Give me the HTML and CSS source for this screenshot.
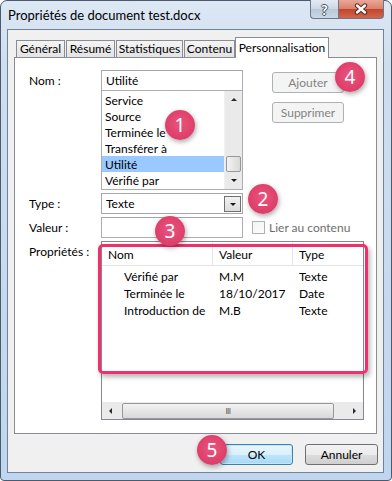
FILE: index.html
```html
<!DOCTYPE html>
<html lang="fr">
<head>
    <meta charset="UTF-8">
    <meta name="viewport" content="width=device-width, initial-scale=1.0">
    <title>Propriétés de document test.docx</title>
    <link rel="stylesheet" href="styles.css">
</head>
<body>
    <div class="window">
        <div class="titlebar">
            <span class="title">Propriétés de document test.docx</span>
            <div class="caption">
                <span class="cap help">?</span>
                <span class="cap close">
                    <svg width="16" height="12" viewBox="0 0 16 12">
                        <path d="M4 2.5 L12 9.5 M12 2.5 L4 9.5" stroke="#5a2a20" stroke-width="4.4" stroke-linecap="round"/>
                        <path d="M4 2.5 L12 9.5 M12 2.5 L4 9.5" stroke="#fff" stroke-width="2.4" stroke-linecap="round"/>
                    </svg>
                </span>
            </div>
        </div>

        <div class="client">
            <div class="tabs">
                <span class="tab t1">Général</span>
                <span class="tab t2">Résumé</span>
                <span class="tab t3">Statistiques</span>
                <span class="tab t4">Contenu</span>
                <span class="tab active">Personnalisation</span>
            </div>

            <div class="panel">
                <div class="form">
                    <label class="lbl">Nom :</label>
                    <div class="namebox">
                        <div class="field">Utilité</div>
                        <div class="listbox">
                            <div class="items">
                                <div class="item">Service</div>
                                <div class="item">Source</div>
                                <div class="item">Terminée le</div>
                                <div class="item">Transférer à</div>
                                <div class="item selected">Utilité</div>
                                <div class="item">Vérifié par</div>
                            </div>
                            <div class="vscroll">
                                <span class="sbtn"><span class="arrow up"></span></span>
                                <span class="track"></span>
                                <span class="thumb"></span>
                                <span class="sbtn"><span class="arrow down"></span></span>
                            </div>
                        </div>
                    </div>
                    <div class="side">
                        <button class="btn disabled">Ajouter</button>
                        <button class="btn disabled">Supprimer</button>
                    </div>

                    <label class="lbl">Type :</label>
                    <div class="field combo">Texte<span class="drop"><span class="arrow down"></span></span></div>
                    <div></div>

                    <label class="lbl">Valeur :</label>
                    <div class="field"></div>
                    <label class="check"><span class="box"></span>Lier au contenu</label>

                    <label class="lbl">Propriétés :</label>
                    <div class="listview">
                        <div class="lv-head">
                            <span class="c1">Nom</span>
                            <span class="c2">Valeur</span>
                            <span class="c3">Type</span>
                        </div>
                        <div class="lv-body">
                            <div class="lv-row"><span class="c1">Vérifié par</span><span class="c2">M.M</span><span class="c3">Texte</span></div>
                            <div class="lv-row"><span class="c1">Terminée le</span><span class="c2">18/10/2017</span><span class="c3">Date</span></div>
                            <div class="lv-row"><span class="c1">Introduction de</span><span class="c2">M.B</span><span class="c3">Texte</span></div>
                        </div>
                        <div class="hscroll">
                            <span class="sbtn"><span class="arrow left"></span></span>
                            <span class="hthumb">III</span>
                            <span class="sbtn"><span class="arrow right"></span></span>
                        </div>
                    </div>
                </div>
            </div>

            <div class="footer">
                <button class="btn default">OK</button>
                <button class="btn">Annuler</button>
            </div>
        </div>

        <!-- annotations -->
        <span class="highlight"></span>
        <span class="mark m1">1</span>
        <span class="mark m2">2</span>
        <span class="mark m3">3</span>
        <span class="mark m4">4</span>
        <span class="mark m5">5</span>
    </div>
</body>
</html>
```

FILE: styles.css
```css
body { margin: 0; font-family: "Segoe UI", Lato, "Noto Sans", sans-serif; font-size: 12px; color: #000; background: #fff; }

.window { position: relative; width: 392px; height: 481px; box-sizing: border-box; border: 1px solid #4b5b6d; border-radius: 7px 7px 4px 4px; padding: 0 7px 7px 6px; display: flex; flex-direction: column; background: linear-gradient(180deg, #dde8f4 0, #cfdeef 60px, #bfd6ee 100%); }

/* title bar */
.titlebar { height: 28px; display: flex; align-items: flex-start; }
.title { padding-left: 1px; line-height: 29px; font-size: 13px; }
.caption { margin-left: auto; display: flex; margin-top: -1px; }
.cap { height: 19px; box-sizing: border-box; border: 1px solid #6a7788; border-top: none; display: flex; align-items: center; justify-content: center; }
.help { width: 28px; border-right: none; border-radius: 0 0 0 4px; background: linear-gradient(180deg, #e3eaf2 0, #ccd7e4 50%, #b9c8d8 50%, #cad7e5 100%); color: #fff; font-weight: bold; font-size: 14px; text-shadow: -1px 0 #4a5766, 1px 0 #4a5766, 0 -1px #4a5766, 0 1px #4a5766; }
.close { width: 46px; border-radius: 0 0 4px 0; background: linear-gradient(180deg, #e9a797 0, #d9806a 50%, #c3432b 50%, #d2664c 100%); }

/* client area */
.client { flex: 1; border: 1px solid #71839a; background: #f0f0f0; padding: 0 6px; display: flex; flex-direction: column; }

.tabs { display: flex; align-items: flex-end; height: 20px; margin: 7px 0 0 2px; position: relative; z-index: 1; }
.tab { height: 17px; box-sizing: border-box; border: 1px solid #898c95; border-bottom: none; background: linear-gradient(180deg, #f4f4f4, #e3e3e3); line-height: 16px; text-align: center; margin-right: 1px; white-space: nowrap; }
.t1 { width: 49px; }
.t2 { width: 49px; }
.t3 { width: 67px; }
.t4 { width: 51px; margin-right: 0; }
.tab.active { width: 94px; height: 21px; margin-bottom: -1px; background: #fff; line-height: 19px; }

.panel { height: 377px; box-sizing: border-box; border: 1px solid #898c95; background: #fff; }

.form { display: grid; grid-template-columns: 72px 142px 1fr; row-gap: 3px; padding: 12px 0 0 14px; }
.lbl { line-height: 21px; }

.field { height: 21px; box-sizing: border-box; border: 1px solid #abadb3; border-top-color: #a3a5aa; padding: 0 4px; line-height: 19px; background: #fff; }
.combo { display: flex; border-color: #a7a7a7; }
.drop { margin: 2px -3px 0 auto; width: 17px; height: 16px; box-sizing: border-box; border: 1px solid #707070; background: linear-gradient(180deg, #f2f2f2, #dcdcdc); display: flex; align-items: center; justify-content: center; }

.listbox { height: 99px; box-sizing: border-box; border: 1px solid #abadb3; border-top: none; display: flex; }
.items { flex: 1; padding-top: 1px; }
.item { height: 16px; line-height: 17px; padding-left: 3px; white-space: nowrap; }
.item.selected { background: #99c9ff; }

.vscroll { width: 17px; display: flex; flex-direction: column; background: #eaeaea; border-left: 1px solid #f0f0f0; }
.sbtn { width: 17px; height: 17px; display: flex; align-items: center; justify-content: center; }
.track { flex: 1; }
.thumb { height: 16px; margin: 0 1px; box-sizing: border-box; border: 1px solid #979797; border-radius: 2px; background: linear-gradient(90deg, #f3f3f3, #d9d9d9); }

.arrow { width: 0; height: 0; border: 3.5px solid transparent; }
.arrow.up { border-bottom-color: #2b2b2b; border-top: none; }
.arrow.down { border-top-color: #1b1b1b; border-bottom: none; }
.arrow.left { border-right-color: #2b2b2b; border-left: none; }
.arrow.right { border-left-color: #2b2b2b; border-right: none; }

.side { display: flex; flex-direction: column; gap: 9px; padding: 2px 0 0 29px; }
.btn { height: 21px; box-sizing: border-box; border: 1px solid #707070; border-radius: 3px; background: linear-gradient(180deg, #f2f2f2 0, #ebebeb 50%, #dddddd 50%, #cfcfcf 100%); font: inherit; color: #000; padding: 0; }
.btn.disabled { width: 72px; border-color: #adb2b5; background: #f4f4f4; color: #838383; }
.btn.default { border-color: #3c7fb1; background: linear-gradient(180deg, #eaf6fd 0, #d9f0fc 50%, #bee6fd 50%, #a7d9f5 100%); box-shadow: inset 0 0 0 1px #c4e7fa; }

.check { display: flex; align-items: center; color: #6d6d6d; padding-left: 9px; }
.box { width: 13px; height: 13px; box-sizing: border-box; border: 1px solid #b1b1b1; background: linear-gradient(135deg, #f4f4f4, #fcfcfc); margin-right: 4px; }

.listview { grid-column: 2 / 4; width: 263px; height: 179px; box-sizing: border-box; border: 1px solid #828790; display: flex; flex-direction: column; }
.lv-head { display: flex; height: 23px; box-sizing: border-box; border-bottom: 1px solid #e5e5e5; line-height: 23px; margin-top: 1px; }
.lv-head span { padding-left: 6px; box-sizing: border-box; border-right: 1px solid #e5e5e5; }
.c1 { width: 111px; }
.c2 { width: 80px; }
.c3 { flex: 1; }
.lv-head .c3 { border-right: none; }
.lv-body { flex: 1; padding-top: 2px; }
.lv-row { display: flex; height: 17px; line-height: 17px; white-space: nowrap; }
.lv-row span { padding-left: 6px; box-sizing: border-box; }
.lv-row .c1 { padding-left: 22px; }

.hscroll { height: 17px; display: flex; align-items: center; background: #eaeaea; }
.hthumb { flex: 1; height: 16px; margin: 0 12px 0 3px; box-sizing: border-box; border: 1px solid #979797; border-radius: 2px; background: linear-gradient(180deg, #f3f3f3, #d9d9d9); font-size: 8px; line-height: 14px; text-align: center; color: #555; letter-spacing: -0.5px; }

.footer { display: flex; justify-content: flex-end; gap: 12px; margin: 10px -1px 0 0; }
.footer .btn { width: 73px; }

/* annotations */
.highlight { position: absolute; left: 97px; top: 243px; width: 270px; height: 130px; box-sizing: border-box; border: 3px solid #f0306a; border-radius: 5px; box-shadow: 2px 3px 5px rgba(0, 0, 0, 0.3); }
.mark { position: absolute; width: 30px; height: 30px; border-radius: 50%; background: radial-gradient(circle at 50% 45%, #e9557e 0, #dc3d68 72%, #e86088 100%); color: #fff; font-family: "Noto Sans", sans-serif; font-size: 19px; line-height: 30px; text-align: center; box-shadow: 1px 2px 5px rgba(0, 0, 0, 0.35); }
.m1 { left: 164px; top: 109px; }
.m2 { left: 247px; top: 183px; }
.m3 { left: 154px; top: 215px; }
.m4 { left: 334px; top: 61px; }
.m5 { left: 196px; top: 434px; }
```
